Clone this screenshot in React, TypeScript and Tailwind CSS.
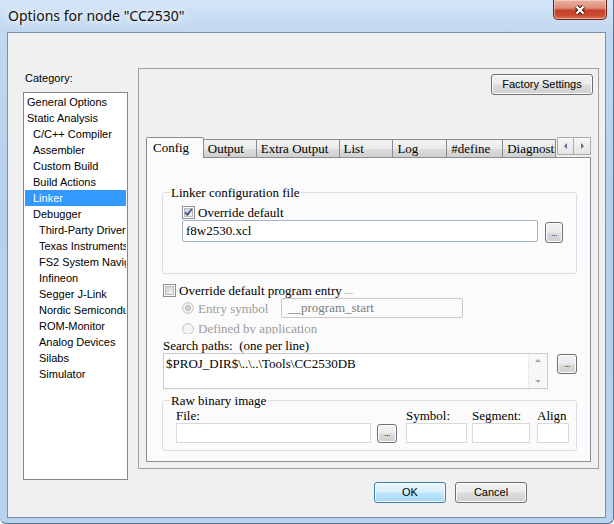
import React from "react";

const SANS = "font-['Liberation_Sans',Arial,sans-serif]";
const SERIF = "font-['Liberation_Serif','Times_New_Roman',serif]";
const TITLE = "font-['Noto_Sans','Open_Sans',sans-serif]";

const CATEGORIES: { label: string; level: number }[] = [
  { label: "General Options", level: 0 },
  { label: "Static Analysis", level: 0 },
  { label: "C/C++ Compiler", level: 1 },
  { label: "Assembler", level: 1 },
  { label: "Custom Build", level: 1 },
  { label: "Build Actions", level: 1 },
  { label: "Linker", level: 1 },
  { label: "Debugger", level: 1 },
  { label: "Third-Party Driver", level: 2 },
  { label: "Texas Instruments", level: 2 },
  { label: "FS2 System Navigator", level: 2 },
  { label: "Infineon", level: 2 },
  { label: "Segger J-Link", level: 2 },
  { label: "Nordic Semiconductor", level: 2 },
  { label: "ROM-Monitor", level: 2 },
  { label: "Analog Devices", level: 2 },
  { label: "Silabs", level: 2 },
  { label: "Simulator", level: 2 },
];

const LEVEL_PAD = ["pl-[2px]", "pl-[8px]", "pl-[14px]"];

const TABS: { label: string; w: string }[] = [
  { label: "Output", w: "w-[53px]" },
  { label: "Extra Output", w: "w-[83px]" },
  { label: "List", w: "w-[54px]" },
  { label: "Log", w: "w-[54px]" },
  { label: "#define", w: "w-[56px]" },
  { label: "Diagnostics", w: "w-[53px]" },
];

const BTN =
  "border border-[#707070] rounded-[3px] bg-[linear-gradient(180deg,#f2f2f2_0%,#ebebeb_48%,#dddddd_52%,#cfcfcf_100%)] shadow-[inset_0_0_0_1px_#fbfbfb]";

function Checkbox({ checked }: { checked?: boolean }) {
  return (
    <svg width="13" height="13" viewBox="0 0 13 13" className="shrink-0">
      <defs>
        <linearGradient id="cb-fill" x1="0" y1="0" x2="1" y2="1">
          <stop offset="0" stopColor="#cdd1d7" />
          <stop offset="1" stopColor="#f7f7f7" />
        </linearGradient>
      </defs>
      <rect x="0.5" y="0.5" width="12" height="12" fill="#ffffff" stroke="#8e8f8f" />
      <rect x="2.5" y="2.5" width="8" height="8" fill="url(#cb-fill)" stroke="#b3b8bf" />
      {checked && (
        <path d="M3.2 6.3 L5.4 8.7 L9.9 3" fill="none" stroke="#3f5a96" strokeWidth="1.9" />
      )}
    </svg>
  );
}

function Radio({ selected }: { selected?: boolean }) {
  return (
    <svg width="12" height="12" viewBox="0 0 12 12" className="shrink-0">
      <circle cx="6" cy="6" r="5.4" fill="#f4f4f4" stroke="#c2c2c2" />
      {selected && <circle cx="6" cy="6" r="2.7" fill="#cfcfcf" stroke="#b4b4b4" strokeWidth="0.7" />}
    </svg>
  );
}

function Dots({ className }: { className: string }) {
  return (
    <div className={`${BTN} flex items-end justify-center shrink-0 ${className}`}>
      <span className={`${SANS} text-[9px] leading-[9px] pb-[4px] text-[#1d1d1d] tracking-[-0.5px]`}>...</span>
    </div>
  );
}

function Arrow({ dir }: { dir: "left" | "right" | "up" | "down" }) {
  const d = {
    left: "M5 1 L2 4 L5 7 Z",
    right: "M3 1 L6 4 L3 7 Z",
    up: "M1 5 L4 2 L7 5 Z",
    down: "M1 3 L4 6 L7 3 Z",
  }[dir];
  return (
    <svg width="8" height="8" viewBox="0 0 8 8">
      <path d={d} fill={dir === "left" || dir === "right" ? "#5a6f8f" : "#a9a9a9"} />
    </svg>
  );
}

function GroupBox({ title, className, children }: { title: string; className: string; children: React.ReactNode }) {
  return (
    <fieldset className={`border border-[#d5dfe5] rounded-[3px] ${className}`}>
      <legend className={`${SERIF} ml-[7px] px-[1px] text-[13px] leading-[15px] text-black`}>{title}</legend>
      {children}
    </fieldset>
  );
}

export default function App() {
  return (
    <div className="w-[614px] h-[524px] flex flex-col overflow-hidden border-r border-b border-[#5b7391] rounded-b-[6px] bg-[linear-gradient(180deg,#d3e5f8_0%,#c1d8f0_6%,#b6cfeb_40%,#b9d2ee_100%)]">
      {/* title bar */}
      <div className="h-[32px] flex items-start shrink-0">
        <div
          className={`${TITLE} pl-[8px] pt-[6px] text-[14px] leading-[19px] text-[#101010] [text-shadow:0_0_6px_#ffffff,0_0_10px_#ffffff]`}
        >
          Options for node "CC2530"
        </div>
        <div className="ml-auto mr-[6px] w-[54px] h-[20px] rounded-b-[5px] border border-t-0 border-[#6a2418] bg-[linear-gradient(180deg,#eab0a2_0%,#de8d78_42%,#c5412a_55%,#cc4a33_80%,#de7558_100%)] shadow-[inset_0_0_0_1px_rgba(255,235,230,0.45)] flex items-center justify-center">
          <svg width="16" height="12" viewBox="0 0 16 12">
            <path d="M4.5 2.5 L11.5 9.5 M11.5 2.5 L4.5 9.5" stroke="#3d1610" strokeWidth="4.4" />
            <path d="M4.5 2.5 L11.5 9.5 M11.5 2.5 L4.5 9.5" stroke="#ffffff" strokeWidth="2.4" />
          </svg>
        </div>
      </div>

      {/* client area */}
      <div className={`${SANS} ml-[7px] w-[599px] h-[486px] border border-[#7d90a8] bg-[#f0f0f0] flex flex-col text-black`}>
        <div className="flex items-start">
          {/* category list */}
          <div className="ml-[15px] pt-[38px] w-[105px] shrink-0">
            <div className="pl-[2px] text-[11px] leading-[14px]">Category:</div>
            <div className="mt-[7px] h-[388px] border border-[#828790] bg-white overflow-hidden pt-[1px]">
              {CATEGORIES.map((c) => {
                const sel = c.label === "Linker";
                return (
                  <div
                    key={c.label}
                    className={`mx-[1px] h-[16px] leading-[16px] text-[11px] whitespace-nowrap overflow-hidden ${LEVEL_PAD[c.level]} ${
                      sel ? "bg-[#3399ff] text-white" : "text-black"
                    }`}
                  >
                    {c.label}
                  </div>
                );
              })}
            </div>
          </div>

          {/* options panel */}
          <div className="ml-[10px] mt-[35px] w-[461px] h-[401px] shrink-0 border border-[#a0a0a0] px-[7px] flex flex-col">
            <div className="flex justify-end pt-[5px] mr-[-2px]">
              <div className={`${BTN} w-[102px] h-[21px] flex items-center justify-center text-[11px]`}>
                Factory Settings
              </div>
            </div>

            {/* tab strip */}
            <div className={`${SERIF} mt-[42px] h-[21px] mb-[-1px] flex items-start relative z-10 text-[13px]`}>
              <div className="w-[58px] h-[21px] border border-b-0 border-[#898c95] bg-[#fbfbfb] pl-[6px] leading-[19px] rounded-t-[2px]">
                Config
              </div>
              {TABS.map((t) => (
                <div
                  key={t.label}
                  className={`${t.w} h-[18px] mt-[2px] border-t border-r border-[#898c95] pl-[4px] leading-[18px] whitespace-nowrap overflow-hidden bg-[linear-gradient(180deg,#f3f3f3_0%,#ebebeb_50%,#dddddd_55%,#cfcfcf_100%)]`}
                >
                  {t.label}
                </div>
              ))}
              <div className="ml-[1px] flex">
                <div className="w-[17px] h-[18px] border border-[#acacac] bg-[linear-gradient(180deg,#f7f7f7,#e3e3e3)] flex items-center justify-center">
                  <Arrow dir="left" />
                </div>
                <div className="w-[17px] h-[18px] border border-l-0 border-[#acacac] bg-[linear-gradient(180deg,#f7f7f7,#e3e3e3)] flex items-center justify-center">
                  <Arrow dir="right" />
                </div>
              </div>
            </div>

            {/* tab page */}
            <div className={`${SERIF} h-[305px] border border-[#898c95] bg-[#fbfbfb] flex flex-col text-[13px] leading-[15px]`}>
              <GroupBox title="Linker configuration file" className="ml-[15px] mt-[27px] w-[415px] h-[89px]">
                <div className="mt-[6px] pl-[19px] h-[13px] flex items-center">
                  <Checkbox checked />
                  <span className="ml-[3px]">Override default</span>
                </div>
                <div className="mt-[1px] pl-[19px] flex items-start">
                  <div className="w-[356px] h-[22px] border border-[#a3b4c6] rounded-[2px] bg-white pl-[3px] leading-[20px]">
                    f8w2530.xcl
                  </div>
                  <Dots className="ml-[7px] mt-[2px] w-[18px] h-[21px]" />
                </div>
              </GroupBox>

              <div className="mt-[10px] pl-[16px] h-[13px] flex items-center">
                <Checkbox />
                <span className="ml-[3px]">Override default program entry</span>
                <span className="ml-[2px] mt-[5px] w-[9px] h-px bg-[#c8c8c8]" />
              </div>

              <div className="mt-[1px] pl-[35px] h-[20px] flex items-center">
                <Radio selected />
                <span className="ml-[4px] w-[83px] text-[#9c9c9c]">Entry symbol</span>
                <div className="w-[182px] h-[20px] border border-[#c9c9c9] rounded-[2px] bg-[#fbfbfb] pl-[6px] leading-[18px] text-[#7d7d7d]">
                  __program_start
                </div>
              </div>

              <div className="h-[16px] overflow-hidden">
                <div className="mt-[3px] pl-[35px] h-[15px] flex items-center">
                  <Radio />
                  <span className="ml-[4px] text-[#9c9c9c]">Defined by application</span>
                </div>
              </div>

              <div className="mt-[4px] pl-[16px] whitespace-pre">Search paths:  (one per line)</div>

              <div className="pl-[16px] flex items-start">
                <div className="w-[385px] h-[36px] border border-[#c7cbd1] bg-white flex">
                  <div className="flex-1 pl-[2px] pt-[2px] leading-[15px] whitespace-nowrap">
                    $PROJ_DIR$\..\..\Tools\CC2530DB
                  </div>
                  <div className="w-[19px] h-full bg-[#f7f7f7] border-l border-[#ededed] flex flex-col items-center justify-between py-[3px]">
                    <Arrow dir="up" />
                    <Arrow dir="down" />
                  </div>
                </div>
                <Dots className="ml-[9px] mt-[1px] w-[20px] h-[20px]" />
              </div>

              <GroupBox title="Raw binary image" className="ml-[15px] mt-[4px] w-[415px] h-[58px]">
                <div className="mt-[1px] pl-[13px] flex items-end">
                  <div className="w-[221px] flex flex-col">
                    <div className="leading-[14px]">File:</div>
                    <div className="flex items-start">
                      <div className="w-[195px] h-[20px] border border-[#d9d9d9] bg-white" />
                      <Dots className="ml-[6px] mt-[1px] w-[20px] h-[19px]" />
                    </div>
                  </div>
                  <div className="ml-[9px] w-[61px] flex flex-col">
                    <div className="leading-[14px]">Symbol:</div>
                    <div className="h-[20px] border border-[#d9d9d9] bg-white" />
                  </div>
                  <div className="ml-[5px] w-[58px] flex flex-col">
                    <div className="leading-[14px]">Segment:</div>
                    <div className="h-[20px] border border-[#d9d9d9] bg-white" />
                  </div>
                  <div className="ml-[7px] w-[32px] flex flex-col">
                    <div className="leading-[14px] whitespace-nowrap">Align</div>
                    <div className="h-[20px] border border-[#d9d9d9] bg-white" />
                  </div>
                </div>
              </GroupBox>
            </div>
          </div>
        </div>

        {/* dialog buttons */}
        <div className="mt-[2px] pl-[366px] flex gap-[9px] text-[11px]">
          <div className="w-[72px] h-[21px] rounded-[3px] border border-[#3c7fb1] bg-[linear-gradient(180deg,#eaf6fd_0%,#d9f0fc_48%,#bee6fd_52%,#a7d9f5_100%)] shadow-[inset_0_0_0_1px_#f4fbff] flex items-center justify-center">
            OK
          </div>
          <div className={`${BTN} w-[72px] h-[21px] flex items-center justify-center`}>Cancel</div>
        </div>
      </div>
    </div>
  );
}
